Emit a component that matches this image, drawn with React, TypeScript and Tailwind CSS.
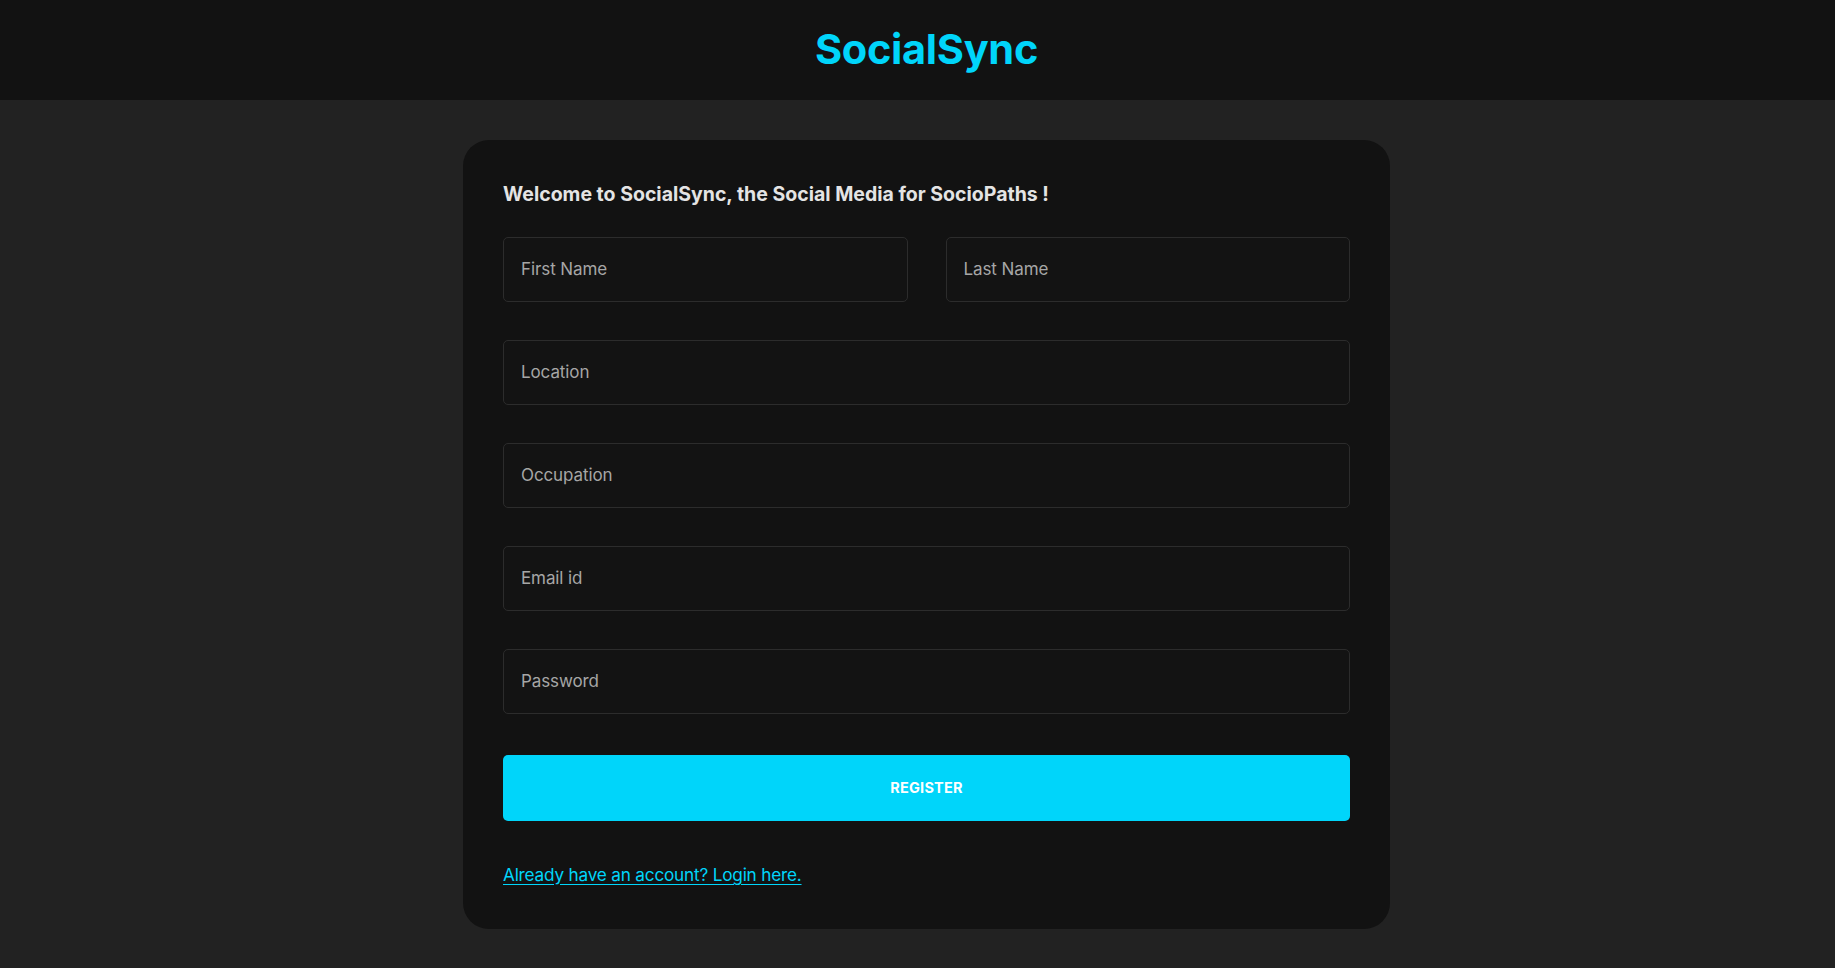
import React from "react";

const font = { fontFamily: "Inter, 'Noto Sans', 'Liberation Sans', sans-serif" };

function Field({ label }: { label: string }) {
  return (
    <div className="h-[65px] w-full rounded-[5px] border border-[#2c2c2c] bg-[#131313] flex items-center px-[17px]">
      <span className="text-[17px] text-[#a6a6a6] tracking-[-0.1px]">{label}</span>
    </div>
  );
}

export default function App() {
  return (
    <div className="min-h-[968px] bg-[#222222]" style={font}>
      <header className="h-[100px] bg-[#121212] flex items-center justify-center pl-[18px]">
        <h1 className="text-[41.5px] font-bold text-[#00D5FA] tracking-[-0.3px] leading-none">SocialSync</h1>
      </header>
      <main className="flex justify-center pl-[18px] pt-[40px] pb-[40px]">
        <div className="w-[927px] rounded-[26px] bg-[#121212] px-[40px] pt-[41px] pb-[41px]">
          <p className="text-[19.5px] font-bold text-[#e4e4e4] leading-[26px] tracking-[0px]">
            Welcome to SocialSync, the Social Media for SocioPaths !
          </p>
          <div className="mt-[30px] flex flex-col gap-[38px]">
            <div className="grid grid-cols-2 gap-[38px]">
              <Field label="First Name" />
              <Field label="Last Name" />
            </div>
            <Field label="Location" />
            <Field label="Occupation" />
            <Field label="Email id" />
            <Field label="Password" />
          </div>
          <button className="mt-[41px] h-[66px] w-full rounded-[5px] bg-[#00D5FA] text-white text-[14.5px] font-bold tracking-[0.2px]">
            REGISTER
          </button>
          <div className="mt-[41px] leading-[25px]">
            <a className="text-[17.2px] text-[#00D5FA] underline underline-offset-[3px] tracking-[-0.2px] cursor-pointer">
              Already have an account? Login here.
            </a>
          </div>
        </div>
      </main>
    </div>
  );
}
